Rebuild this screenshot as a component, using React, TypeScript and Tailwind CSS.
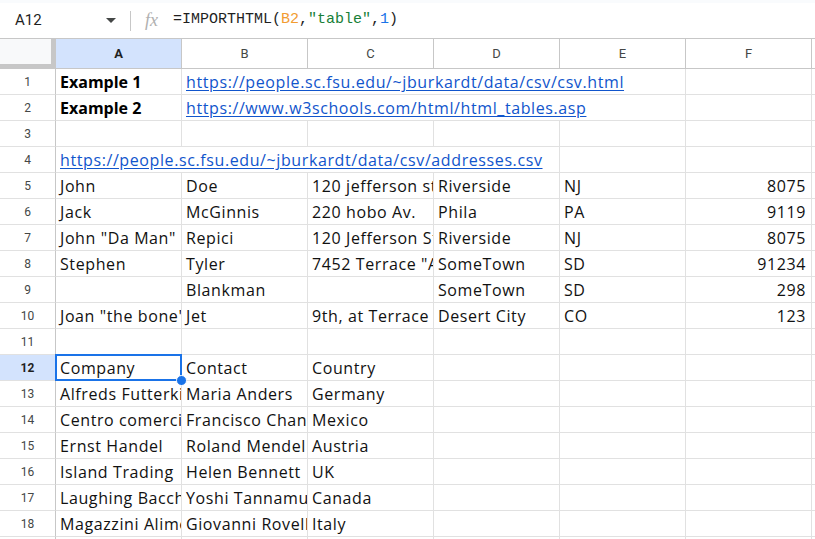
import React from 'react';

type Cell = {
  text?: string;
  span?: number;
  bold?: boolean;
  link?: boolean;
  right?: boolean;
};

const COLS = ['A', 'B', 'C', 'D', 'E', 'F'];

const t = (text: string, extra: Partial<Cell> = {}): Cell => ({ text, ...extra });
const e: Cell = {};

const rows: Cell[][] = [
  [t('Example 1', { bold: true }), t('https://people.sc.fsu.edu/~jburkardt/data/csv/csv.html', { link: true, span: 4 }), e],
  [t('Example 2', { bold: true }), t('https://www.w3schools.com/html/html_tables.asp', { link: true, span: 4 }), e],
  [e, e, e, e, e, e],
  [t('https://people.sc.fsu.edu/~jburkardt/data/csv/addresses.csv', { link: true, span: 4 }), e, e],
  [t('John'), t('Doe'), t('120 jefferson st.'), t('Riverside'), t('NJ'), t('8075', { right: true })],
  [t('Jack'), t('McGinnis'), t('220 hobo Av.'), t('Phila'), t('PA'), t('9119', { right: true })],
  [t('John "Da Man"'), t('Repici'), t('120 Jefferson St.'), t('Riverside'), t('NJ'), t('8075', { right: true })],
  [t('Stephen'), t('Tyler'), t('7452 Terrace "At the Plaza" road'), t('SomeTown'), t('SD'), t('91234', { right: true })],
  [e, t('Blankman'), e, t('SomeTown'), t('SD'), t('298', { right: true })],
  [t('Joan "the bone", Anne'), t('Jet'), t('9th, at Terrace plc'), t('Desert City'), t('CO'), t('123', { right: true })],
  [e, e, e, e, e, e],
  [t('Company'), t('Contact'), t('Country'), e, e, e],
  [t('Alfreds Futterkiste'), t('Maria Anders'), t('Germany'), e, e, e],
  [t('Centro comercial Moctezuma'), t('Francisco Chang'), t('Mexico'), e, e, e],
  [t('Ernst Handel'), t('Roland Mendel'), t('Austria'), e, e, e],
  [t('Island Trading'), t('Helen Bennett'), t('UK'), e, e, e],
  [t('Laughing Bacchus Winecellars'), t('Yoshi Tannamuri'), t('Canada'), e, e, e],
  [t('Magazzini Alimentari Riuniti'), t('Giovanni Rovelli'), t('Italy'), e, e, e],
  [e, e, e, e, e, e],
  [e, e, e, e, e, e],
];

const SELECTED_ROW = 12;

const FormulaBar: React.FC = () => (
  <div className="h-[38px] bg-white flex flex-col">
    <div className="h-[3px] bg-[#f9fbfd]" />
    <div className="flex-1 flex items-center">
      <div className="w-[130px] flex items-center pl-[15px] pr-[14px]">
        <span className="flex-1 text-[15px] text-[#1f1f1f] font-['Roboto',sans-serif]">A12</span>
        <svg width="10" height="5" viewBox="0 0 10 5" className="text-[#444746]">
          <path d="M0 0 L10 0 L5 5 Z" fill="currentColor" />
        </svg>
      </div>
      <div className="w-px h-[20px] bg-[#c7c7c7]" />
      <span className="ml-[14px] w-[28px] text-[18px] italic text-[#b0b0b0] font-['Liberation_Serif',serif]">fx</span>
      <span className="text-[15px] text-[#1f1f1f] font-['Liberation_Mono',monospace] whitespace-pre">
        =IMPORTHTML(<span className="text-[#f29c31]">B2</span>,<span className="text-[#188038]">"table"</span>,<span className="text-[#1a73e8]">1</span>)
      </span>
    </div>
  </div>
);

const HeaderRow: React.FC = () => (
  <div className="flex h-[31px] border-t border-b border-[#c7c7c7] font-['Roboto',sans-serif]">
    <div className="w-[56px] shrink-0 flex">
      <div className="w-[51px] bg-[#f8f9fa] border-b-4 border-[#c7c7c7]" />
      <div className="w-[5px] bg-[#c7c7c7]" />
    </div>
    {COLS.map((c) => (
      <div
        key={c}
        className={`w-[126px] shrink-0 border-r border-[#c7c7c7] flex items-center justify-center text-[13px] ${
          c === 'A' ? 'bg-[#d3e3fd] font-bold text-[#1f1f1f]' : 'text-[#444746]'
        }`}
      >
        {c}
      </div>
    ))}
    <div className="flex-1" />
  </div>
);

const DataRow: React.FC<{ n: number; cells: Cell[] }> = ({ n, cells }) => {
  const selected = n === SELECTED_ROW;
  return (
    <div className={`flex h-[26px] ${selected ? 'relative z-10' : ''}`}>
      <div
        className={`w-[56px] shrink-0 border-r border-b border-r-[#c7c7c7] border-b-[#e1e1e1] flex items-center justify-center text-[12px] font-['Roboto',sans-serif] ${
          selected ? 'bg-[#d3e3fd] font-bold text-[#1f1f1f]' : 'text-[#444746]'
        }`}
      >
        {n}
      </div>
      {cells.map((cell, i) => {
        const span = cell.span ?? 1;
        const isSel = selected && i === 0;
        return (
          <div
            key={i}
            style={{ width: span * 126 }}
            className={`relative shrink-0 border-r border-b border-[#e1e1e1] flex items-start pt-px whitespace-nowrap text-[16px] leading-[24px] font-['Open_Sans',sans-serif] tracking-[0.6px] ${
              cell.right ? 'justify-end pr-[5px]' : 'pl-[4px]'
            } ${isSel ? 'z-10' : 'overflow-hidden'}`}
          >
            {cell.text && (
              <span
                className={`${cell.bold ? 'font-bold tracking-normal text-black' : 'text-[#111]'} ${
                  cell.link ? 'text-[#1155cc] underline underline-offset-2' : ''
                }`}
              >
                {cell.text}
              </span>
            )}
            {isSel && (
              <>
                <div className="absolute -top-px -left-px -right-px -bottom-px border-2 border-[#1a73e8] pointer-events-none" />
                <div className="absolute -right-[6px] -bottom-[6px] w-[11px] h-[11px] rounded-full bg-[#1a73e8] border border-white" />
              </>
            )}
          </div>
        );
      })}
      <div className="flex-1 border-b border-[#e1e1e1]" />
    </div>
  );
};

export default function App() {
  return (
    <div className="w-[815px] h-[539px] overflow-hidden bg-white">
      <FormulaBar />
      <HeaderRow />
      {rows.map((cells, i) => (
        <DataRow key={i} n={i + 1} cells={cells} />
      ))}
    </div>
  );
}
